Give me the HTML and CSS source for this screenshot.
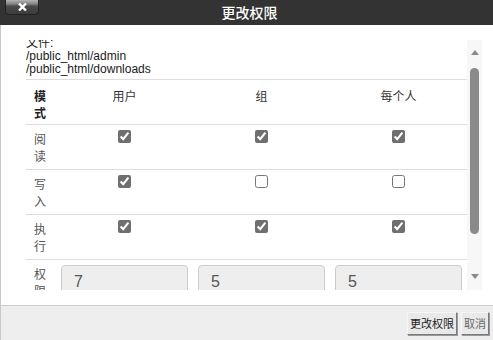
FILE: index.html
```html
<!DOCTYPE html>
<html lang="zh-CN">
<head>
<meta charset="utf-8">
<title>更改权限</title>
<link rel="stylesheet" href="styles.css">
</head>
<body>
<div class="dialog">
  <div class="titlebar">
    <button class="close" type="button" aria-label="关闭">
      <svg width="9" height="8" viewBox="0 0 9 8"><path d="M1 0.5 L8 7.5 M8 0.5 L1 7.5" stroke="#fff" stroke-width="2.4" fill="none"/></svg>
    </button>
    <h1 class="title">更改权限</h1>
  </div>
  <div class="body">
    <div class="viewport">
      <div class="content">
        <div class="files">文件:<br>/public_html/admin<br>/public_html/downloads</div>
        <table class="perms">
          <colgroup><col class="c-mode"><col><col><col></colgroup>
          <thead>
            <tr><th class="mode">模式</th><th>用户</th><th>组</th><th>每个人</th></tr>
          </thead>
          <tbody>
            <tr><td class="mode">阅读</td><td><input type="checkbox" checked></td><td><input type="checkbox" checked></td><td><input type="checkbox" checked></td></tr>
            <tr><td class="mode">写入</td><td><input type="checkbox" checked></td><td><input type="checkbox"></td><td><input type="checkbox"></td></tr>
            <tr><td class="mode">执行</td><td><input type="checkbox" checked></td><td><input type="checkbox" checked></td><td><input type="checkbox" checked></td></tr>
            <tr class="values"><td class="mode">权限</td><td><input class="num" type="text" value="7" readonly></td><td><input class="num" type="text" value="5" readonly></td><td><input class="num" type="text" value="5" readonly></td></tr>
          </tbody>
        </table>
      </div>
      <div class="scrollbar">
        <span class="arrow up"></span>
        <span class="thumb"></span>
        <span class="arrow down"></span>
      </div>
    </div>
  </div>
  <div class="footer">
    <button class="btn primary" type="button">更改权限</button>
    <button class="btn cancel" type="button">取消</button>
  </div>
</div>
</body>
</html>
```

FILE: styles.css
```css
html, body {
  margin: 0;
  padding: 0;
  background: #fff;
}
body {
  font-family: "Liberation Sans", "Noto Sans CJK SC", sans-serif;
}
.dialog {
  width: 493px;
  height: 340px;
  display: flex;
  flex-direction: column;
  overflow: hidden;
}
.titlebar {
  height: 25px;
  flex: none;
  background: #333333;
  display: grid;
  grid-template-columns: 1fr auto 1fr;
  align-items: center;
}
.close {
  grid-column: 1;
  justify-self: start;
  align-self: start;
  margin: 0 0 0 5px;
  width: 34px;
  height: 15px;
  padding: 0;
  border: 1px solid #222;
  border-top: none;
  border-radius: 0 0 4px 4px;
  background: linear-gradient(#b4b4b4 0, #8a8a8a 25%, #4a4a4a 45%, #3c3c3c 100%);
  display: flex;
  align-items: center;
  justify-content: center;
}
.close svg { display: block; margin-top: -1px; }
.title {
  grid-column: 2;
  margin: 0;
  padding-left: 6px;
  font-family: "Noto Sans CJK SC", sans-serif;
  font-size: 14px;
  font-weight: 500;
  color: #fff;
  line-height: 25px;
}
.body {
  flex: none;
  height: 280px;
  padding-top: 15px;
  border-left: 1px solid #c8c8c8;
  box-sizing: border-box;
}
.viewport {
  height: 250px;
  display: flex;
  padding-left: 25px;
}
.content {
  width: 441px;
  height: 250px;
  overflow: hidden;
  flex: none;
}
.files {
  margin-top: -3px;
  font-size: 12px;
  line-height: 13px;
  color: #1a1a1a;
  padding-bottom: 3px;
  border-bottom: 1px solid #dddddd;
}
.perms {
  width: 441px;
  table-layout: fixed;
  border-collapse: collapse;
  font-family: "Noto Sans CJK SC", sans-serif;
  font-size: 12px;
  line-height: 17px;
  color: #555;
}
.c-mode { width: 30px; }
.perms th, .perms td {
  padding: 5px 5px;
  text-align: center;
  vertical-align: top;
  border-bottom: 1px solid #dddddd;
  height: 34px;
}
.perms th {
  padding-top: 7px;
  padding-bottom: 3px;
  font-weight: normal;
  color: #333;
}
.perms .mode {
  text-align: left;
  padding-left: 8px;
  padding-right: 8px;
}
.perms th.mode {
  font-weight: bold;
  color: #222;
}
.perms input[type="checkbox"] {
  margin: 0;
  width: 13px;
  height: 13px;
  accent-color: #6f6f6f;
  vertical-align: top;
}
.num {
  display: block;
  width: 100%;
  height: 34px;
  box-sizing: border-box;
  margin: 0;
  padding: 6px 12px;
  border: 1px solid #cccccc;
  border-radius: 4px;
  background: #eeeeee;
  font-family: "Liberation Sans", sans-serif;
  font-size: 16px;
  color: #555;
}
.scrollbar {
  width: 15px;
  flex: none;
  background: #f7f7f7;
  display: flex;
  flex-direction: column;
  align-items: center;
}
.arrow {
  width: 0;
  height: 0;
  border-left: 4.5px solid transparent;
  border-right: 4.5px solid transparent;
}
.arrow.up {
  margin-top: 10px;
  border-bottom: 5px solid #8a8a8a;
}
.arrow.down {
  margin-top: auto;
  margin-bottom: 11px;
  border-top: 5px solid #8a8a8a;
}
.thumb {
  margin-top: 13px;
  width: 9px;
  height: 166px;
  background: #8a8a8a;
  border-radius: 5px;
}
.footer {
  flex: 1;
  background: #eeeeee;
  border-top: 1px solid #cccccc;
  border-left: 1px solid #c8c8c8;
  display: flex;
  justify-content: flex-end;
  align-items: flex-start;
  gap: 4px;
  padding: 6px 4px 0 0;
}
.btn {
  height: 23px;
  margin: 0;
  padding: 0 2px;
  font-family: "Noto Sans CJK SC", sans-serif;
  font-size: 11px;
  line-height: 21px;
  background: #e9e9e9;
  border: 1px solid;
  border-color: #f6f6f6 #7a7a7a #7a7a7a #f6f6f6;
  box-shadow: 1px 1px 0 #9a9a9a;
  border-radius: 0;
  color: #222;
}
.btn.cancel {
  color: #666;
}
```
